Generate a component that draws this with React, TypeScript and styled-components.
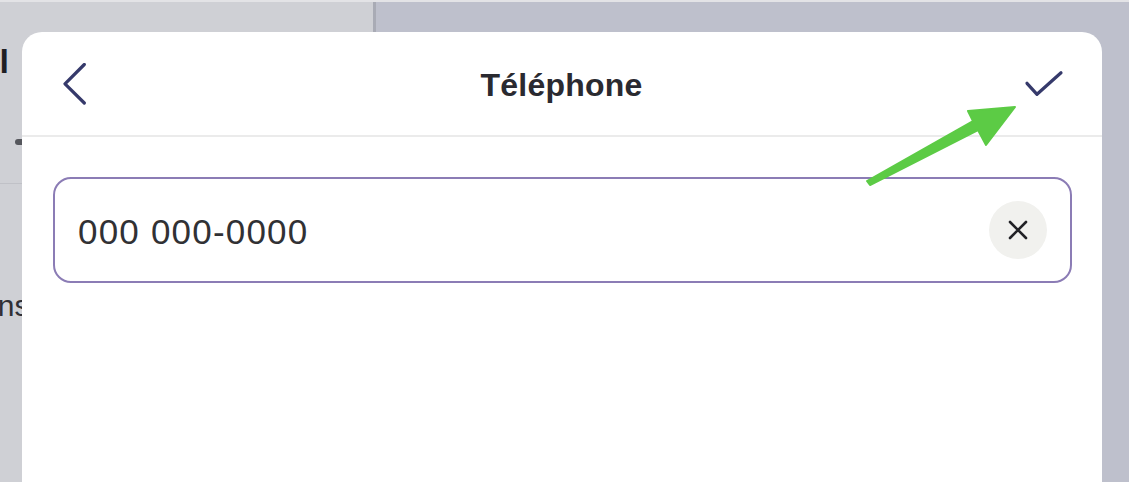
import styled, { createGlobalStyle } from "styled-components";

const GlobalStyle = createGlobalStyle`
  html, body {
    margin: 0;
    padding: 0;
    height: 100%;
    overflow: hidden;
  }
  body {
    font-family: "Liberation Sans", Arial, sans-serif;
  }
`;

const Screen = styled.div`
  position: relative;
  height: 100vh;
  display: flex;
  flex-direction: column;
  overflow: hidden;
`;

const TopStrip = styled.div`
  height: 2px;
  background: #e3e3e6;
`;

const Backdrop = styled.div`
  flex: 1;
  display: grid;
  grid-template-columns: 373px 3px 1fr;
`;

const SidePanel = styled.div`
  background: #cfd0d5;
  display: flex;
  flex-direction: column;
  overflow: hidden;
`;

const SideTitle = styled.div`
  margin: 40px 0 0 -78px;
  font-size: 34px;
  font-weight: 700;
  color: #1f1f24;
  white-space: nowrap;
`;

const SideIcon = styled.div`
  margin: 58px 0 0 15px;
  width: 16px;
  height: 6px;
  border-radius: 3px;
  background: #55565c;
`;

const SideRule = styled.div`
  margin-top: 38px;
  height: 1px;
  background: #c0c1c7;
`;

const SideText = styled.div`
  margin: 105px 0 0 -134px;
  font-size: 30px;
  color: #303036;
  white-space: nowrap;
`;

const Divider = styled.div`
  background: #a9abb5;
`;

const RightPanel = styled.div`
  background: #bec0cc;
`;

const Overlay = styled.div`
  position: absolute;
  inset: 0;
  padding: 32px 27px 0 22px;
`;

const Modal = styled.div`
  height: calc(100% + 40px);
  background: #ffffff;
  border-radius: 20px;
  display: flex;
  flex-direction: column;
`;

const Header = styled.div`
  height: 103px;
  border-bottom: 2px solid #ebebeb;
  display: grid;
  grid-template-columns: 80px 1fr 80px;
  align-items: center;
  padding: 0 38px 0 41px;
`;

const IconButton = styled.button<{ $align: "start" | "end" }>`
  justify-self: ${({ $align }) => $align};
  border: 0;
  background: none;
  padding: 0;
  display: flex;
  cursor: pointer;
`;

const Title = styled.h1`
  margin: 3px 4px 0 0;
  text-align: center;
  font-size: 32px;
  font-weight: 700;
  color: #2a2a30;
  letter-spacing: 0.2px;
`;

const Body = styled.div`
  padding: 40px 30px 0 31px;
`;

const Field = styled.div`
  height: 102px;
  border: 2px solid #8b7cb5;
  border-radius: 18px;
  display: flex;
  align-items: center;
  padding: 0 23px 0 23px;
`;

const PhoneInput = styled.input`
  flex: 1;
  border: 0;
  outline: none;
  background: transparent;
  font-family: "Liberation Sans", Arial, sans-serif;
  font-size: 35px;
  letter-spacing: 1.2px;
  color: #313134;
  padding: 3px 0 0;
`;

const ClearButton = styled.button`
  width: 58px;
  height: 58px;
  border-radius: 50%;
  border: 0;
  background: #f1f1ee;
  display: flex;
  align-items: center;
  justify-content: center;
  padding: 0;
  cursor: pointer;
`;

const Pointer = styled.svg`
  position: absolute;
  left: 0;
  top: 0;
  pointer-events: none;
`;

export default function App() {
  return (
    <>
      <GlobalStyle />
      <Screen>
        <TopStrip />
        <Backdrop>
          <SidePanel>
            <SideTitle>Profil</SideTitle>
            <SideIcon />
            <SideRule />
            <SideText>Notifications</SideText>
          </SidePanel>
          <Divider />
          <RightPanel />
        </Backdrop>

        <Overlay>
          <Modal>
            <Header>
              <IconButton $align="start" aria-label="Retour">
                <svg width="24" height="42" viewBox="0 0 24 42" fill="none">
                  <path
                    d="M21.3 1.5 L2 20.8 L21.3 40"
                    stroke="#363a6b"
                    strokeWidth="3.2"
                    strokeLinecap="round"
                    strokeLinejoin="round"
                  />
                </svg>
              </IconButton>
              <Title>Téléphone</Title>
              <IconButton $align="end" aria-label="Valider">
                <svg width="40" height="30" viewBox="0 0 40 30" fill="none">
                  <path
                    d="M3 14.3 L13 25.3 L37 3.7"
                    stroke="#363a6b"
                    strokeWidth="3.2"
                    strokeLinecap="round"
                    strokeLinejoin="round"
                  />
                </svg>
              </IconButton>
            </Header>
            <Body>
              <Field>
                <PhoneInput defaultValue="000 000-0000" />
                <ClearButton aria-label="Effacer">
                  <svg width="20" height="20" viewBox="0 0 20 20" fill="none">
                    <path
                      d="M2 2 L18 18 M18 2 L2 18"
                      stroke="#222226"
                      strokeWidth="2.6"
                      strokeLinecap="round"
                    />
                  </svg>
                </ClearButton>
              </Field>
            </Body>
          </Modal>
        </Overlay>

        <Pointer width="1129" height="482" viewBox="0 0 1129 482">
          <polygon
            points="867,181 973,121 968,111 1015,107 986,145 978,130 870,185"
            fill="#5ccb45"
            stroke="#5ccb45"
            strokeWidth="2"
            strokeLinejoin="round"
          />
        </Pointer>
      </Screen>
    </>
  );
}
